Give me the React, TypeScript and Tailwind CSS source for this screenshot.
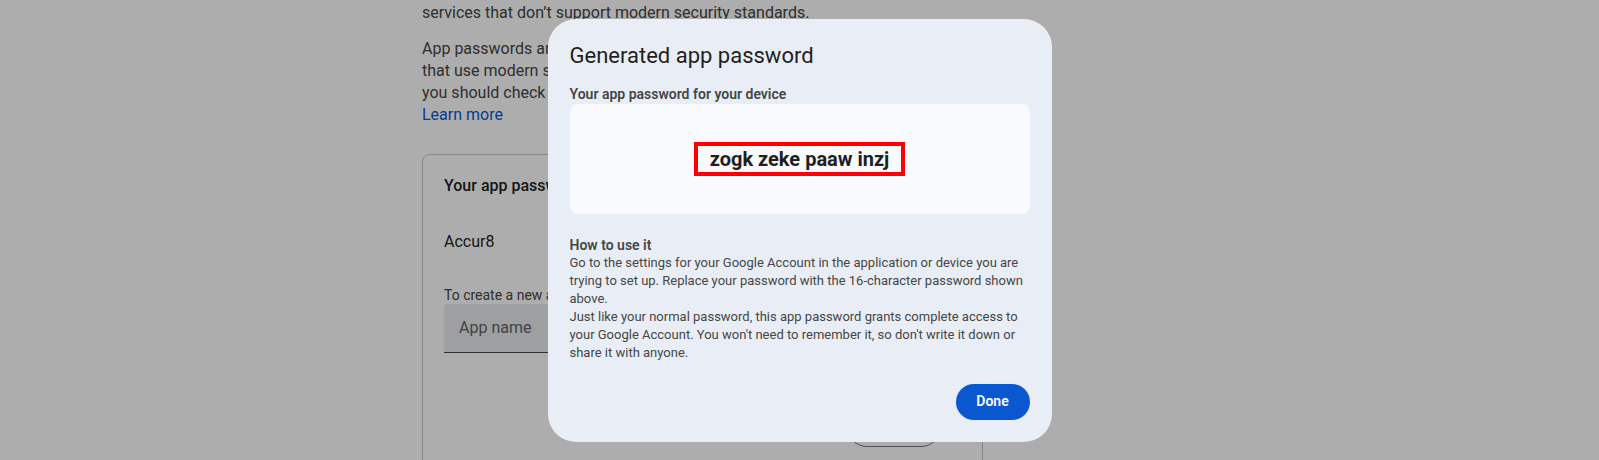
import React from 'react';

function BackgroundPage() {
  return (
    <div className="ml-[422px] w-[561px] pt-[2px] text-[16px] leading-[22px] text-[#444746]">
      <p>services that don’t support modern security standards.</p>
      <p className="mt-[14px]">
        <span className="block whitespace-nowrap">App passwords are less secure than using up-to-date apps and services</span>
        <span className="block whitespace-nowrap">that use modern security standards. Before you create an app password,</span>
        <span className="block whitespace-nowrap">you should check to see if your app needs this in order to sign in.</span>
        <a className="block text-[#0b57d0]">Learn more</a>
      </p>

      <div className="mt-[28px] h-[400px] rounded-lg border border-[#c4c7c5] px-[21px] pt-[20px]">
        <div className="text-[16px] font-medium leading-[22px] text-[#1f1f1f]">Your app passwords</div>
        <div className="mt-[34px] text-[16px] leading-[22px] text-[#1f1f1f]">Accur8</div>
        <div className="mt-[33px] text-[14px] leading-[18px] text-[#444746]">
          To create a new app specific password, type a name for it below...
        </div>
        <div className="flex h-[49px] items-center rounded-t-[4px] border-b border-[#444746] bg-[#e8eaed] px-[15px] text-[16px] text-[#5f6368]">
          App name
        </div>
        <div className="mt-[54px] flex justify-end pr-[20px]">
          <button className="h-[40px] w-[94px] rounded-full border border-[#747775] text-[14px] font-medium text-[#0b57d0]">
            Create
          </button>
        </div>
      </div>
    </div>
  );
}

function PasswordDialog() {
  return (
    <div className="w-[504px] rounded-[28px] bg-[#e9eef6] px-[22px] pb-[22px] pt-[21px]">
      <h2 className="text-[22px] leading-[32px] text-[#1f1f1f]">Generated app password</h2>
      <div className="mt-[12px] text-[14px] font-semibold leading-[20px] text-[#444746]">
        Your app password for your device
      </div>
      <div className="flex h-[110px] items-center justify-center rounded-[8px] bg-[#f8fafd]">
        <div className="border-[4px] border-[#ff0000] px-[12px]">
          <span className="block text-[20px] font-bold leading-[26px] text-[#1f1f1f]">zogk zeke paaw inzj</span>
        </div>
      </div>
      <div className="mt-[22px] text-[13px] leading-[18px] text-[#444746]">
        <div className="text-[14px] font-semibold">How to use it</div>
        <p>
          Go to the settings for your Google Account in the application or device you are trying to set up.
          Replace your password with the 16-character password shown above.
        </p>
        <p>
          Just like your normal password, this app password grants complete access to your Google Account. You
          won't need to remember it, so don't write it down or share it with anyone.
        </p>
      </div>
      <div className="mt-[22px] flex justify-end">
        <button className="h-[36px] w-[74px] rounded-full bg-[#0b57d0] text-[14px] font-semibold text-white">
          Done
        </button>
      </div>
    </div>
  );
}

export default function App() {
  return (
    <div className="relative h-[460px] w-full overflow-hidden bg-white font-['Roboto',sans-serif]">
      <BackgroundPage />
      <div className="absolute inset-0 bg-black/[0.32]" />
      <div className="absolute inset-0 flex items-center justify-center">
        <PasswordDialog />
      </div>
    </div>
  );
}
